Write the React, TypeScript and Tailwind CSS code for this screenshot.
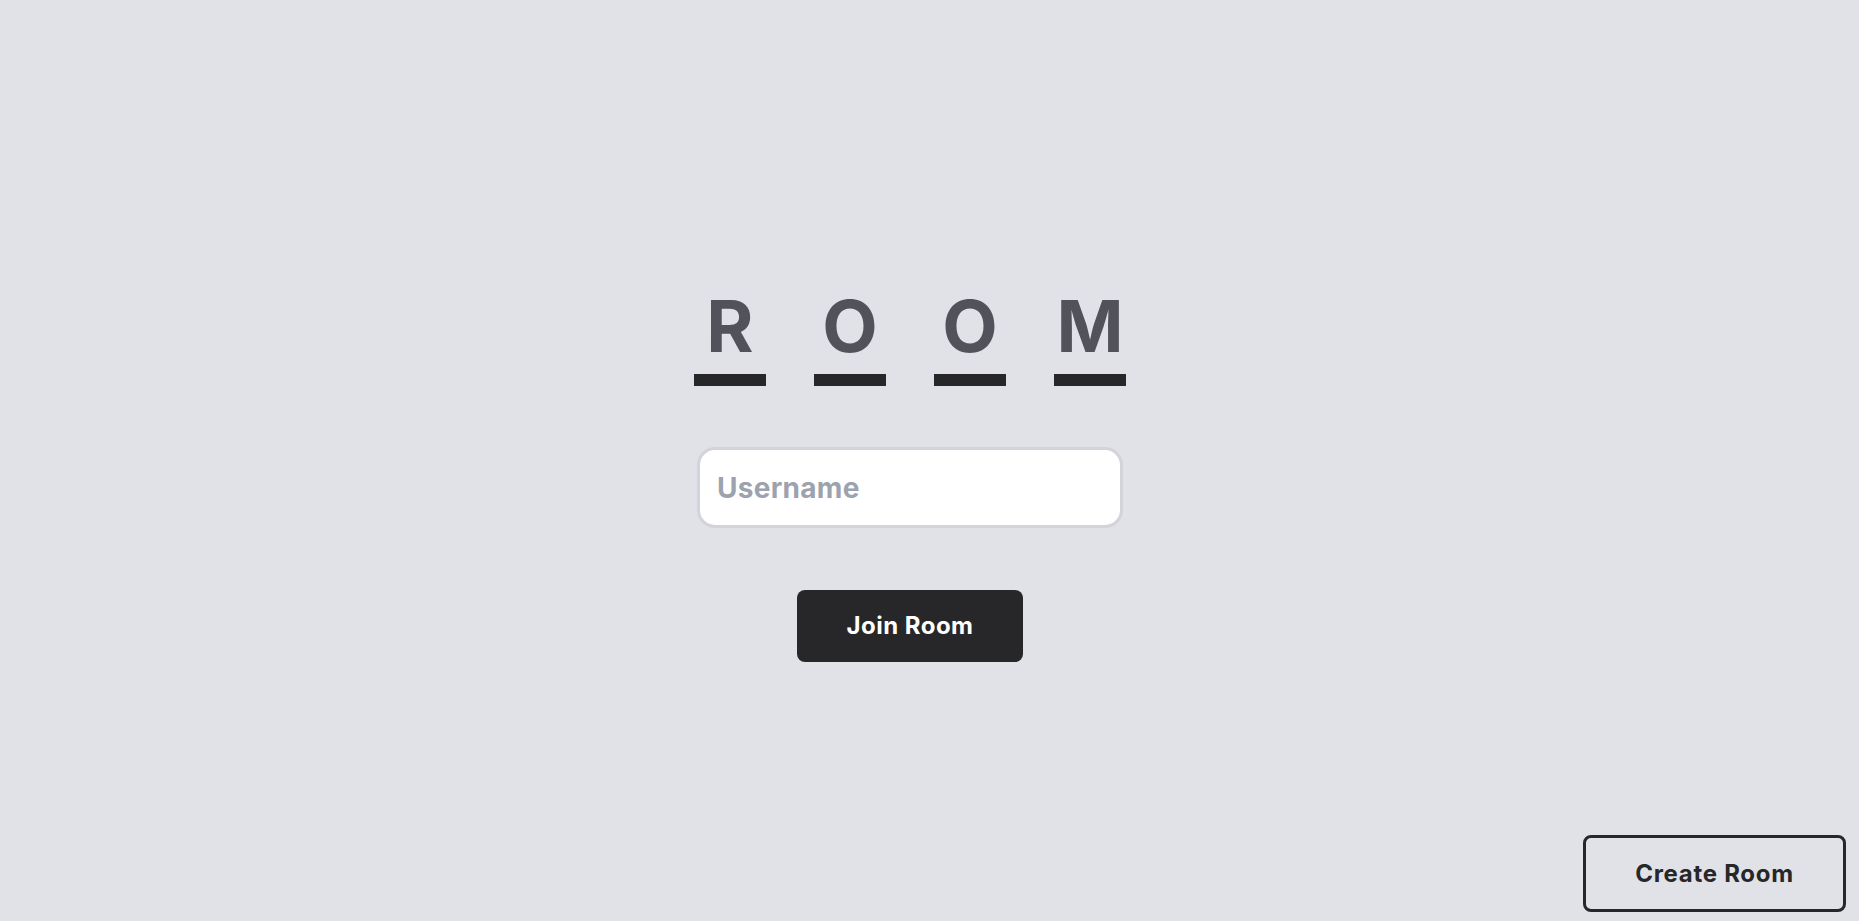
import { useState } from "react";

const letters = ["R", "O", "O", "M"];

/** Big spaced title, each letter sits over its own bar */
function RoomTitle() {
  return (
    <div className="flex gap-12">
      {letters.map((letter, index) => (
        <div key={index} className="flex w-[72px] flex-col items-center">
          <span className="text-[72px] font-bold leading-none text-[#52525b]">
            {letter}
          </span>
          <div className="mt-3 h-3 w-[72px] bg-[#27272a]" />
        </div>
      ))}
    </div>
  );
}

export default function App() {
  const [username, setUsername] = useState("");

  return (
    <div className="flex h-screen flex-col bg-[#e0e2e7] font-['Inter','Liberation_Sans',sans-serif]">
      <main className="flex flex-1 flex-col items-center pt-[290px] pr-[39px]">
        <RoomTitle />

        <input
          value={username}
          onChange={(e) => setUsername(e.target.value)}
          placeholder="Username"
          className="mt-[61px] h-[81px] w-[426px] rounded-[18px] border-[3px] border-[#d3d4d9] bg-white px-[17px] text-[28px] font-bold tracking-[0.01em] text-[#27272a] outline-none placeholder:text-[#9ca3af]"
        />

        <button className="mt-[62px] h-[72px] w-[226px] rounded-lg bg-[#27272a] text-2xl font-bold tracking-[0.02em] text-white">
          Join Room
        </button>
      </main>

      <div className="flex justify-end pr-[13px] pb-[9px]">
        <button className="h-[77px] w-[263px] rounded-lg border-[3px] border-[#27272a] text-2xl font-bold tracking-[0.03em] text-[#27272a]">
          Create Room
        </button>
      </div>
    </div>
  );
}
